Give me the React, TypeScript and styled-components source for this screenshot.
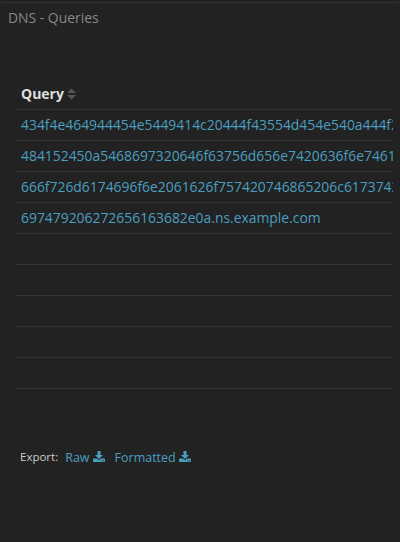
import React from "react";
import styled, { createGlobalStyle } from "styled-components";

const GlobalStyle = createGlobalStyle`
  * { box-sizing: border-box; }
  body {
    margin: 0;
    background: #222222;
    font-family: "Open Sans", "Noto Sans", sans-serif;
    font-size: 14px;
    overflow: hidden;
  }
`;

const Page = styled.main`
  height: 542px;
  padding-top: 2px;
  background: #222222;
`;

const Panel = styled.section`
  height: 538px;
  border-top: 1px solid #343434;
  border-top-left-radius: 4px;
  border-top-right-radius: 4px;
`;

const Title = styled.h2`
  margin: 0;
  padding: 5px 8px 0;
  height: 75px;
  font-size: 13.9px;
  font-weight: 400;
  line-height: 20px;
  color: #888888;
`;

const Table = styled.table`
  width: 377px;
  margin-left: 16px;
  table-layout: fixed;
  border-collapse: separate;
  border-spacing: 0;
`;

const HeaderCell = styled.th`
  height: 32px;
  padding: 0 5px;
  border-bottom: 1px solid #343434;
  text-align: left;
  font-weight: 700;
  line-height: 20px;
  color: #dfdfdf;
`;

const HeaderLabel = styled.div`
  display: flex;
  align-items: center;
  gap: 3px;
`;

const Cell = styled.td`
  height: 31px;
  padding: 0 0 0 5px;
  border-bottom: 1px solid #343434;
  font-size: 13.9px;
  line-height: 20px;
  white-space: nowrap;
  overflow: hidden;
`;

const Link = styled.a`
  color: #4a9fc0;
  text-decoration: none;
  cursor: pointer;
`;

const ExportBar = styled.footer`
  display: flex;
  align-items: center;
  margin: 58px 0 0 20px;
  height: 20px;
  font-size: 11.5px;
  line-height: 20px;
  color: #cccccc;
`;

const ExportLink = styled(Link)<{ $gap: number }>`
  display: flex;
  align-items: center;
  gap: 3px;
  margin-left: ${(p) => p.$gap}px;
  padding-top: 1px;
  font-size: 12.5px;

  svg {
    margin-top: -2px;
  }
`;

const SortIcon = () => (
  <svg width="9" height="12" viewBox="0 0 9 12" fill="#53575a">
    <path d="M4.5 0.5 9 5H0zM4.5 11.5 0 7h9z" />
  </svg>
);

const DownloadIcon = () => (
  <svg width="12" height="12" viewBox="0 0 12 12" fill="currentColor">
    <path d="M4.5 0h3v4H10L6 8 2 4h2.5z" />
    <path
      fillRule="evenodd"
      d="M.7 7.5h3.4L6 9.3l1.9-1.8h3.4q.7 0 .7.7v2.1q0 .7-.7.7H.7q-.7 0-.7-.7V8.2q0-.7.7-.7zM8.2 9.3v.9h.9v-.9zm1.8 0v.9h.9v-.9z"
    />
  </svg>
);

const queries = [
  "434f4e464944454e5449414c20444f43554d454e540a444f20",
  "484152450a5468697320646f63756d656e7420636f6e746169",
  "666f726d6174696f6e2061626f757420746865206c61737420",
  "697479206272656163682e0a.ns.example.com",
  "",
  "",
  "",
  "",
  "",
];

export default function App() {
  return (
    <Page>
      <GlobalStyle />
      <Panel>
        <Title>DNS - Queries</Title>
        <Table>
          <thead>
            <tr>
              <HeaderCell>
                <HeaderLabel>
                  Query
                  <SortIcon />
                </HeaderLabel>
              </HeaderCell>
            </tr>
          </thead>
          <tbody>
            {queries.map((query, index) => (
              <tr key={index}>
                <Cell>{query && <Link>{query}</Link>}</Cell>
              </tr>
            ))}
          </tbody>
        </Table>
        <ExportBar>
          <span>Export:</span>
          <ExportLink $gap={7}>
            Raw
            <DownloadIcon />
          </ExportLink>
          <ExportLink $gap={10}>
            Formatted
            <DownloadIcon />
          </ExportLink>
        </ExportBar>
      </Panel>
    </Page>
  );
}
